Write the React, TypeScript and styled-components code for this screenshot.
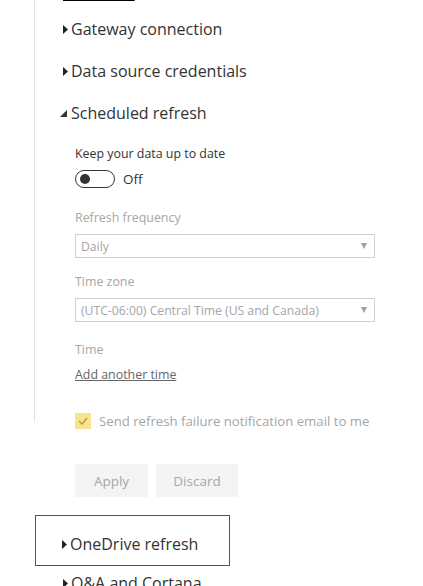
import React from "react";
import styled, { createGlobalStyle } from "styled-components";

const GlobalStyle = createGlobalStyle`
  html, body {
    margin: 0;
    padding: 0;
    background: #ffffff;
  }
  body {
    font-family: "Segoe UI", "Open Sans", "Noto Sans", sans-serif;
    color: #333333;
    overflow: hidden;
  }
`;

const Page = styled.div`
  width: 423px;
  height: 586px;
  padding-left: 34px;
  box-sizing: border-box;
  overflow: hidden;
`;

const Panel = styled.div`
  border-left: 1px solid #e3e3e3;
  padding-bottom: 37px;
`;

const TopLink = styled.a`
  display: block;
  margin: -22px 0 10px 28px;
  height: 20px;
  line-height: 20px;
  font-size: 16px;
  color: #000;
  text-decoration: underline;
  text-decoration-thickness: 2px;
  text-underline-offset: 5px;
`;

const Heading = styled.div<{ $indent: number }>`
  display: flex;
  align-items: center;
  height: 42px;
  padding-left: ${(p) => p.$indent}px;
  font-size: 16px;
  color: #333;
  cursor: pointer;
`;

const Caret = styled.span`
  display: inline-flex;
  width: 8px;
`;

const Body = styled.div`
  padding-left: 40px;
  display: flex;
  flex-direction: column;
`;

const Label = styled.div<{ $muted?: boolean; $gap: number }>`
  font-size: 12.4px;
  line-height: 20px;
  margin-top: ${(p) => p.$gap}px;
  color: ${(p) => (p.$muted ? "#a6a6a6" : "#333")};
`;

const ToggleRow = styled.div`
  display: flex;
  align-items: center;
  gap: 8px;
  margin-top: 6px;
  font-size: 13.5px;
  color: #333;
`;

const Track = styled.span`
  width: 40px;
  height: 18px;
  box-sizing: border-box;
  border: 1px solid #333;
  border-radius: 9px;
  display: flex;
  align-items: center;
  padding-left: 4px;
`;

const Knob = styled.span`
  width: 10px;
  height: 10px;
  border-radius: 50%;
  background: #333;
`;

const Select = styled.div`
  width: 300px;
  height: 24px;
  box-sizing: border-box;
  margin-top: 6px;
  border: 1px solid #d0d0d0;
  display: flex;
  align-items: center;
  justify-content: space-between;
  padding: 0 7px 0 5px;
  font-size: 12.2px;
  color: #a6a6a6;
`;

const Arrow = styled.span`
  width: 0;
  height: 0;
  border-left: 3px solid transparent;
  border-right: 3px solid transparent;
  border-top: 6px solid #a0a0a0;
`;

const AddLink = styled.a`
  margin-top: 5px;
  font-size: 12.4px;
  line-height: 20px;
  color: #666;
  text-decoration: underline;
  align-self: flex-start;
`;

const CheckRow = styled.div`
  display: flex;
  align-items: center;
  gap: 8px;
  height: 20px;
  margin-top: -11px;
  padding-left: 41px;
  font-size: 13.2px;
  color: #a6a6a6;
`;

const Box = styled.span`
  width: 16px;
  height: 16px;
  background: #fae38b;
  display: flex;
  align-items: center;
  justify-content: center;
`;

const Buttons = styled.div`
  display: flex;
  gap: 8px;
  margin-top: 33px;
  padding-left: 41px;
`;

const Button = styled.button<{ $width: number }>`
  width: ${(p) => p.$width}px;
  height: 33px;
  border: none;
  background: #f4f4f4;
  color: #a6a6a6;
  font-family: inherit;
  font-size: 13.5px;
  padding: 0;
`;

const Highlight = styled.div`
  width: 195px;
  box-sizing: border-box;
  margin: 18px 0 0 1px;
  padding-top: 7px;
  border: 1px solid #e81123;
`;

const Tail = styled.div`
  margin-top: -4px;
`;

const RightCaret = () => (
  <Caret>
    <svg width="5" height="9" viewBox="0 0 5 9">
      <path d="M0 0 L5 4.5 L0 9 Z" fill="#222" />
    </svg>
  </Caret>
);

const DownCaret = () => (
  <Caret>
    <svg width="7" height="7" viewBox="0 0 7 7" style={{ marginLeft: -3, marginRight: 3 }}>
      <path d="M7 0 L7 7 L0 7 Z" fill="#333" />
    </svg>
  </Caret>
);

export default function App() {
  return (
    <Page>
      <GlobalStyle />
      <Panel>
        <TopLink>Summary</TopLink>
        <Heading $indent={28}>
          <RightCaret />
          Gateway connection
        </Heading>
        <Heading $indent={28}>
          <RightCaret />
          Data source credentials
        </Heading>
        <Heading $indent={28}>
          <DownCaret />
          Scheduled refresh
        </Heading>
        <Body>
          <Label $gap={10}>Keep your data up to date</Label>
          <ToggleRow>
            <Track>
              <Knob />
            </Track>
            Off
          </ToggleRow>
          <Label $muted $gap={20}>Refresh frequency</Label>
          <Select>
            Daily
            <Arrow />
          </Select>
          <Label $muted $gap={14}>Time zone</Label>
          <Select>
            (UTC-06:00) Central Time (US and Canada)
            <Arrow />
          </Select>
          <Label $muted $gap={18}>Time</Label>
          <AddLink>Add another time</AddLink>
        </Body>
      </Panel>
      <CheckRow>
        <Box>
          <svg width="10" height="8" viewBox="0 0 10 8">
            <path d="M1 4 L4 7 L9 1" fill="none" stroke="#a99a5a" strokeWidth="1.2" />
          </svg>
        </Box>
        Send refresh failure notification email to me
      </CheckRow>
      <Buttons>
        <Button $width={73}>Apply</Button>
        <Button $width={82}>Discard</Button>
      </Buttons>
      <Highlight>
        <Heading $indent={26}>
          <RightCaret />
          OneDrive refresh
        </Heading>
      </Highlight>
      <Tail>
        <Heading $indent={29}>
          <RightCaret />
          Q&amp;A and Cortana
        </Heading>
      </Tail>
    </Page>
  );
}
